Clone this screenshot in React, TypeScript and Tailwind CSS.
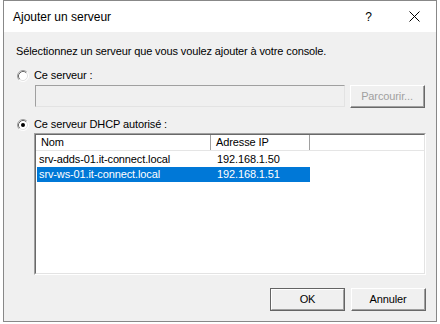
import React from "react";

const font = { fontFamily: '"Liberation Sans", Arial, sans-serif' };

function Radio({ checked }: { checked?: boolean }) {
  return (
    <svg width="12" height="12" viewBox="0 0 12 12" className="shrink-0">
      <circle cx="6" cy="6" r="5" fill="#fff" />
      <path d="M2.11 9.89 A5.5 5.5 0 0 1 9.89 2.11" fill="none" stroke="#a0a0a0" strokeWidth="1" />
      <path d="M9.89 2.11 A5.5 5.5 0 0 1 2.11 9.89" fill="none" stroke="#ffffff" strokeWidth="1" />
      <path d="M2.82 9.18 A4.5 4.5 0 0 1 9.18 2.82" fill="none" stroke="#696969" strokeWidth="1" />
      <path d="M9.18 2.82 A4.5 4.5 0 0 1 2.82 9.18" fill="none" stroke="#e3e3e3" strokeWidth="1" />
      {checked && <circle cx="6" cy="6" r="2" fill="#000" />}
    </svg>
  );
}

function Button({ label, isDefault, disabled }: { label: string; isDefault?: boolean; disabled?: boolean }) {
  if (isDefault) {
    return (
      <div className="w-[75px] h-[23px] border border-[#646464]">
        <div className="w-full h-full border-t border-l border-t-white border-l-white border-b border-r border-b-[#a0a0a0] border-r-[#a0a0a0] bg-[#f0f0f0] flex items-center justify-center text-[11px] text-black">
          {label}
        </div>
      </div>
    );
  }
  return (
    <div className="w-[75px] h-[23px] border-t border-l border-t-white border-l-white border-b border-r border-b-[#696969] border-r-[#696969] bg-[#f0f0f0]">
      <div
        className={
          "w-full h-full border-b border-r border-b-[#a0a0a0] border-r-[#a0a0a0] flex items-center justify-center text-[11px] " +
          (disabled ? "text-[#a0a0a0]" : "text-black")
        }
      >
        {label}
      </div>
    </div>
  );
}

export default function App() {
  return (
    <div className="bg-white w-[440px] h-[324px]" style={font}>
      <div className="ml-[3px] w-[434px] h-[322px] border border-[#888888] flex flex-col">
        {/* Title bar */}
        <div className="h-[31px] bg-white flex items-center justify-between pl-[9px] pr-[16px] shrink-0">
          <span className="text-[12px] text-black">Ajouter un serveur</span>
          <div className="flex items-center">
            <span className="text-[12px] text-black mr-[37px]">?</span>
            <svg width="11" height="11" viewBox="0 0 11 11">
              <path d="M0.5 0.5 L10.5 10.5 M10.5 0.5 L0.5 10.5" stroke="#000" strokeWidth="1" />
            </svg>
          </div>
        </div>

        {/* Content */}
        <div className="flex-1 bg-[#f0f0f0] pl-[12px] pr-[10px] pt-[13px] flex flex-col text-[11px] text-black leading-[13px] tracking-[-0.12px]">
          <div className="h-[13px]">Sélectionnez un serveur que vous voulez ajouter à votre console.</div>

          <div className="mt-[11px] h-[13px] flex items-center ml-[1px] gap-[5px]">
            <Radio />
            <span>Ce serveur :</span>
          </div>

          <div className="mt-[3px] ml-[19px] flex gap-[5px]">
            <div className="w-[310px] h-[22px] border border-t-[#a0a0a0] border-l-[#a0a0a0] border-b-[#e3e3e3] border-r-[#e3e3e3] bg-[#f0f0f0]" />
            <Button label="Parcourir..." disabled />
          </div>

          <div className="mt-[10px] h-[13px] flex items-center ml-[1px] gap-[5px]">
            <Radio checked />
            <span>Ce serveur DHCP autorisé :</span>
          </div>

          <div className="mt-[2px] ml-[18px] w-[392px] h-[142px] border border-t-[#a0a0a0] border-l-[#a0a0a0] border-b-white border-r-white">
            <div className="w-full h-full border border-t-[#696969] border-l-[#696969] border-b-[#e3e3e3] border-r-[#e3e3e3] bg-white flex flex-col">
              <div className="h-[16px] flex border-b border-[#e5e5e5] shrink-0">
                <div className="w-[175px] border-r border-[#a0a0a0] pl-[5px] flex items-center">Nom</div>
                <div className="w-[99px] border-r border-[#a0a0a0] pl-[5px] flex items-center">Adresse IP</div>
                <div className="flex-1" />
              </div>
              <div className="pt-[1px] flex flex-col">
                <div className="h-[15px] flex items-center">
                  <div className="w-[176px] pl-[3px]">srv-adds-01.it-connect.local</div>
                  <div className="w-[99px] pl-[5px]">192.168.1.50</div>
                </div>
                <div className="h-[15px] flex items-center ml-[1px] w-[273px] bg-[#0078d7] text-white">
                  <div className="w-[175px] pl-[2px]">srv-ws-01.it-connect.local</div>
                  <div className="w-[98px] pl-[5px]">192.168.1.51</div>
                </div>
              </div>
            </div>
          </div>

          <div className="mt-[13px] ml-[18px] w-[392px] flex justify-end gap-[6px]">
            <Button label="OK" isDefault />
            <Button label="Annuler" />
          </div>
        </div>
      </div>
    </div>
  );
}
